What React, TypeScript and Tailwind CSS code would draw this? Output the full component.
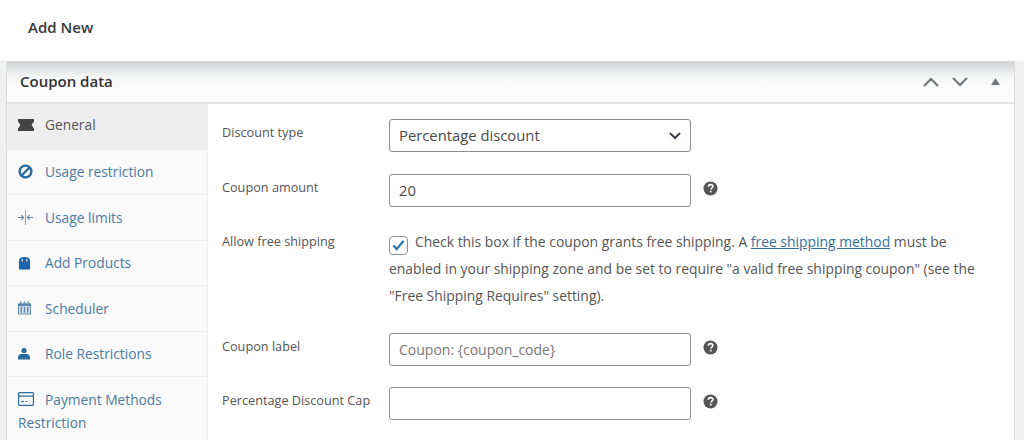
import type { ReactNode } from "react";

const font = "font-['Open_Sans',sans-serif]";

function HelpTip() {
  return (
    <svg viewBox="0 0 16 16" className="h-[15px] w-[15px] shrink-0">
      <circle cx="8" cy="8" r="7.5" fill="#555" />
      <path d="M5.6 6.2c.1-1.5 1.1-2.3 2.5-2.3s2.4.8 2.4 2c0 1-.6 1.5-1.3 2-.5.4-.7.6-.7 1.2" fill="none" stroke="#fff" strokeWidth="1.7" />
      <rect x="7.4" y="10.4" width="1.8" height="1.8" fill="#fff" />
    </svg>
  );
}

function TicketIcon() {
  return (
    <svg viewBox="0 0 16 12" className="h-[12px] w-[16px]">
      <path d="M0 0h16v2.5l-2.5 3.500 2.500 3.500V12H0V9.500L2.500 6 0 2.500z" fill="#444" />
    </svg>
  );
}

function BlockIcon() {
  return (
    <svg viewBox="0 0 16 16" className="h-[15px] w-[15px]">
      <circle cx="8" cy="8" r="6.300" fill="none" stroke="#2a6a9c" strokeWidth="2.600" />
      <path d="M4 12 12 4" stroke="#2a6a9c" strokeWidth="2.600" />
    </svg>
  );
}

function LimitsIcon() {
  return (
    <svg viewBox="0 0 16 16" className="h-[15px] w-[15px]" fill="none" stroke="#5f8cb0" strokeWidth="1.200">
      <path d="M8 0v16" stroke="#8ea9cc" />
      <path d="M0 8h6M3.500 5.500 6 8l-2.500 2.500M16 8h-6M12.500 5.500 10 8l2.500 2.500" />
    </svg>
  );
}

function BagIcon() {
  return (
    <svg viewBox="0 0 14 14" className="h-[14px] w-[13px]">
      <path d="M1 5C1 2 3 .5 7 .5s6 1.500 6 4.500v9H1z" fill="#1f64a8" />
      <path d="M4.500 2.500v3M9.500 2.500v3" stroke="#fff" strokeWidth="1" />
    </svg>
  );
}

function CalendarIcon() {
  return (
    <svg viewBox="0 0 14 14" className="h-[14px] w-[13px]">
      <path d="M0 2h14v12H0z" fill="#5f88ab" />
      <path d="M1 5h12v8H1z" fill="#d7e2ec" />
      <path d="M3 0v3M7 0v3M11 0v3" stroke="#5f88ab" strokeWidth="1.500" />
      <path d="M3.500 6v6M7 6v6M10.500 6v6" stroke="#5f88ab" strokeWidth="1.500" />
    </svg>
  );
}

function UserIcon() {
  return (
    <svg viewBox="0 0 14 14" className="h-[13px] w-[12px]" fill="#2a6a9c">
      <circle cx="7" cy="3.500" r="3" />
      <path d="M0 14v-2.500C0 9 2 7.500 4 7.500h6c2 0 4 1.500 4 4V14z" />
    </svg>
  );
}

function CardIcon() {
  return (
    <svg viewBox="0 0 16 14" className="h-[14px] w-[16px]" fill="none" stroke="#2f6f9f" strokeWidth="1.200">
      <rect x="0.600" y="0.600" width="14.800" height="12.800" rx="1" />
      <path d="M1 4.200h14M3 9.500h3M7.500 9.500h2" />
    </svg>
  );
}

function NavItem({ icon, label, active }: { icon: ReactNode; label: string; active?: boolean }) {
  return (
    <div
      className={`flex h-[45.5px] items-center border-b border-[#eeeeee] pl-[11px] text-[13.750px] ${
        active ? "bg-[#eeeeee] pb-px text-[#555555]" : "pt-[2px] text-[#4a7ba3]"
      }`}
    >
      <span className="flex w-[27px] shrink-0 -translate-y-px items-center">{icon}</span>
      {label}
    </div>
  );
}

function Row({ label, className, labelClass, children }: { label: string; className: string; labelClass: string; children: ReactNode }) {
  return (
    <div className={`flex items-start ${className}`}>
      <div className={`w-[181px] shrink-0 pl-[14px] text-[12.700px] leading-[20px] text-[#555555] ${labelClass}`}>{label}</div>
      {children}
    </div>
  );
}

export default function App() {
  return (
    <div className={`h-[440px] w-[1024px] overflow-hidden bg-[#f0f0f1] ${font}`}>
      <div className="flex h-[61px] items-center bg-white pb-[6px] pl-[28px] text-[15px] font-semibold text-[#3a3a3a]">
        Add New
      </div>

      <div className="ml-[6px] h-[379px] w-[1009px] overflow-hidden border-x border-[#dcdcde] bg-white">
        <div className="flex h-[43px] items-center justify-between border-b-2 border-[#e4e4e4] bg-gradient-to-b from-[#cfd1d2] via-[#f7f7f7] via-40% to-white pl-[13px] pr-[14px]">
          <span className="text-[15px] font-semibold text-[#333333]">Coupon data</span>
          <div className="flex items-center">
            <svg viewBox="0 0 16 10" className="h-[10px] w-[16px]" fill="none" stroke="#72777c" strokeWidth="2.200">
              <path d="M1 9l7-7 7 7" />
            </svg>
            <svg viewBox="0 0 16 10" className="ml-[13px] h-[10px] w-[16px]" fill="none" stroke="#72777c" strokeWidth="2.200">
              <path d="M1 1l7 7 7-7" />
            </svg>
            <svg viewBox="0 0 10 8" className="ml-[23px] h-[7px] w-[9px]" fill="#72777c">
              <path d="M5 0l5 8H0z" />
            </svg>
          </div>
        </div>

        <div className="flex">
          <div className="h-[340px] w-[201px] shrink-0 border-r border-[#eeeeee] bg-[#fafafa]">
            <NavItem active icon={<TicketIcon />} label="General" />
            <NavItem icon={<BlockIcon />} label="Usage restriction" />
            <NavItem icon={<LimitsIcon />} label="Usage limits" />
            <NavItem icon={<BagIcon />} label="Add Products" />
            <NavItem icon={<CalendarIcon />} label="Scheduler" />
            <NavItem icon={<UserIcon />} label="Role Restrictions" />
            <div className="pl-[11px] pt-[12px] text-[13.750px] leading-[22.500px] text-[#4a7ba3]">
              <span className="inline-block w-[27px] align-[-1px]">
                <CardIcon />
              </span>
              Payment Methods
              <br />
              Restriction
            </div>
          </div>

          <div className="min-w-0 flex-1 pt-[15px]">
            <Row label="Discount type" labelClass="pt-[3px]" className="h-[33px]">
              <div className="flex h-[33px] w-[302px] items-center justify-between rounded-[3px] border border-[#8c8f94] px-[9px] text-[14.800px] text-[#4a4a4a]">
                Percentage discount
                <svg viewBox="0 0 12 8" className="h-[8px] w-[12px]" fill="none" stroke="#3c434a" strokeWidth="2">
                  <path d="M1 1l5 5 5-5" />
                </svg>
              </div>
            </Row>

            <Row label="Coupon amount" labelClass="pt-[3px]" className="mt-[22px] h-[33px]">
              <div className="flex h-[33px] w-[302px] items-center rounded-[3px] border border-[#8c8f94] pl-[9px] text-[14.800px] text-[#4a4a4a]">
                20
              </div>
              <div className="ml-[12px] flex h-[29px] items-center">
                <HelpTip />
              </div>
            </Row>

            <Row label="Allow free shipping" labelClass="pt-[3px]" className="mt-[21px]">
              <p className="w-[600px] text-[13.900px] leading-[27px] text-[#555555]">
                <span className="mr-[7px] inline-flex h-[19px] w-[19px] items-center justify-center rounded-[4px] border border-[#8c8f94] bg-white align-[-4px]">
                  <svg viewBox="0 0 14 12" className="h-[11px] w-[13px]" fill="none" stroke="#2271b1" strokeWidth="2.400">
                    <path d="M1.500 6l3.500 4 7.500-9" />
                  </svg>
                </span>
                Check this box if the coupon grants free shipping. A{" "}
                <span className="text-[#36719f] underline">free shipping method</span> must be enabled in your shipping zone and be set to require "a valid free shipping coupon" (see the "Free Shipping Requires" setting).
              </p>
            </Row>

            <Row label="Coupon label" labelClass="pt-[3px]" className="mt-[24px] h-[33px]">
              <div className="flex h-[33px] w-[302px] items-center rounded-[3px] border border-[#8c8f94] pl-[9px] text-[14px] text-[#777777]">
                {"Coupon: {coupon_code}"}
              </div>
              <div className="ml-[12px] flex h-[29px] items-center">
                <HelpTip />
              </div>
            </Row>

            <Row label="Percentage Discount Cap" labelClass="pt-[3px]" className="mt-[21px] h-[33px]">
              <div className="h-[33px] w-[302px] rounded-[3px] border border-[#8c8f94]" />
              <div className="ml-[12px] flex h-[29px] items-center">
                <HelpTip />
              </div>
            </Row>
          </div>
        </div>
      </div>
    </div>
  );
}
